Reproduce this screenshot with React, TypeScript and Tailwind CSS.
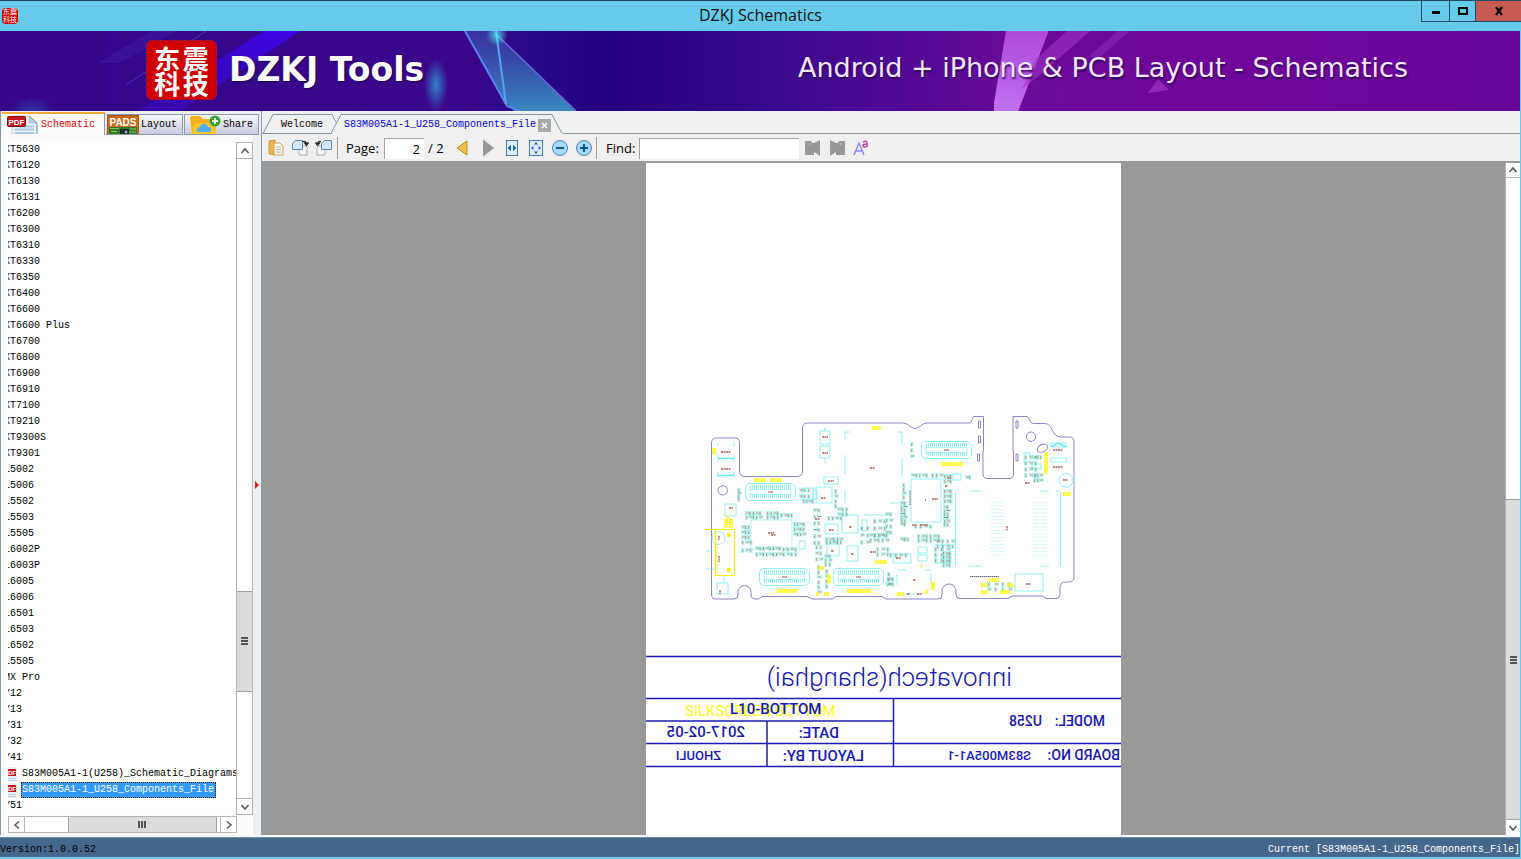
import React, { useState } from 'react';

const MODELS = [
  'XT5630', 'XT6120', 'XT6130', 'XT6131', 'XT6200', 'XT6300', 'XT6310', 'XT6330', 'XT6350', 'XT6400',
  'XT6600', 'XT6600 Plus', 'XT6700', 'XT6800', 'XT6900', 'XT6910', 'XT7100', 'XT9210', 'XT9300S', 'XT9301',
  'L5002', 'L5006', 'L5502', 'L5503', 'L5505', 'L6002P', 'L6003P', 'L6005', 'L6006', 'L6501', 'L6503',
  'L6502', 'L5505', 'MX Pro', 'Y12', 'Y13', 'Y31', 'Y32', 'Y41',
];
const FILES = ['S83M005A1-1(U258)_Schematic_Diagrams', 'S83M005A1-1_U258_Components_File'];

function Seal({ small = false }: { small?: boolean }) {
  return (
    <div
      className={
        small
          ? "grid h-4 w-4 shrink-0 grid-cols-2 place-items-center overflow-hidden rounded-sm bg-[#d00000] px-px font-['Noto_Sans_CJK_SC',sans-serif] text-[7px] leading-[7px] text-white"
          : "grid h-[60px] w-[71px] shrink-0 grid-cols-2 place-items-center rounded-md border border-[#a0103a] bg-[#d00000] px-1.5 py-1 font-['Noto_Sans_CJK_SC',sans-serif] text-[26px] leading-[25px] font-bold text-white"
      }
    >
      <span>东</span>
      <span>震</span>
      <span>科</span>
      <span>技</span>
    </div>
  );
}

function TitleBar() {
  return (
    <header className="flex h-[31px] shrink-0 items-start border-t border-[#1c4a66] bg-[#66cbea]">
      <div className="flex h-[29px] w-[100px] items-center pl-0.5">
        <Seal small />
      </div>
      <h1 className="flex-1 text-center font-['Open_Sans',sans-serif] text-[16px] leading-[29px] text-[#111]">DZKJ Schematics</h1>
      <div className="flex h-[21px] w-[100px] border-b border-l border-[#1c4a66]">
        <button aria-label="Minimize" className="flex w-7 items-center justify-center border-r border-[#1c4a66]">
          <svg width="10" height="10"><rect x="1" y="5" width="8" height="3" fill="#000" /></svg>
        </button>
        <button aria-label="Maximize" className="flex w-[26px] items-center justify-center border-r border-[#1c4a66]">
          <svg width="10" height="10"><rect x="1" y="2" width="8" height="6" fill="none" stroke="#000" strokeWidth="2" /></svg>
        </button>
        <button aria-label="Close" className="flex flex-1 items-center justify-center bg-[#c75a52]">
          <svg width="10" height="10"><path d="M2 1L8 9M8 1L2 9" stroke="#000" strokeWidth="2.2" /></svg>
        </button>
      </div>
    </header>
  );
}

function BannerArt() {
  return (
    <svg className="absolute inset-0 h-full w-full" viewBox="0 0 1520 80" preserveAspectRatio="xMidYMid slice" aria-hidden="true">
      <defs>
        <linearGradient id="base" x1="0" x2="1">
          <stop offset="0" stopColor="#33068a" />
          <stop offset="0.31" stopColor="#3b068c" />
          <stop offset="0.35" stopColor="#260a86" />
          <stop offset="0.4" stopColor="#230080" />
          <stop offset="0.5" stopColor="#37088c" />
          <stop offset="0.57" stopColor="#4a0a94" />
          <stop offset="0.67" stopColor="#6a0a98" />
          <stop offset="0.8" stopColor="#70069a" />
          <stop offset="1" stopColor="#68069a" />
        </linearGradient>
        <linearGradient id="beam" x1="0" y1="1" x2="1" y2="0">
          <stop offset="0" stopColor="#3a0abc" stopOpacity="0.6" />
          <stop offset="1" stopColor="#3e06e8" />
        </linearGradient>
        <linearGradient id="glass" x1="0" x2="0" y1="0" y2="1">
          <stop offset="0" stopColor="#3a55b0" stopOpacity="0.55" />
          <stop offset="1" stopColor="#3a88c0" />
        </linearGradient>
        <linearGradient id="pink" x1="0" x2="0" y1="0" y2="1">
          <stop offset="0" stopColor="#b04ad6" />
          <stop offset="0.5" stopColor="#b65ce6" />
          <stop offset="1" stopColor="#c070f2" />
        </linearGradient>
        <radialGradient id="glow">
          <stop offset="0" stopColor="#3080c8" />
          <stop offset="1" stopColor="#3080c8" stopOpacity="0" />
        </radialGradient>
        <radialGradient id="spark">
          <stop offset="0" stopColor="#50f0f0" />
          <stop offset="1" stopColor="#50f0f0" stopOpacity="0" />
        </radialGradient>
      </defs>
      <rect width="1520" height="80" fill="url(#base)" />
      <path d="M264 0H300L180 80H138Z" fill="url(#beam)" />
      <path d="M152 0H176L120 32H98Z" fill="#4a30b0" opacity="0.3" />
      <path d="M206 0L126 54" stroke="#7060e0" opacity="0.5" />
      <ellipse cx="436" cy="54" rx="12" ry="27" fill="url(#glow)" />
      <ellipse cx="32" cy="80" rx="22" ry="14" fill="url(#glow)" opacity="0.4" />
      <path d="M465 0H497L506 75Z" fill="url(#glass)" />
      <path d="M497 4L576 80H514L506 72Z" fill="url(#glass)" />
      <path d="M465 0L507 75L520 80" fill="none" stroke="#5a84ec" strokeWidth="2" />
      <path d="M496 0L506 73" stroke="#58a4ee" strokeWidth="2" />
      <path d="M497 4L576 80" stroke="#7068e0" strokeWidth="1.5" />
      <circle cx="497" cy="4" r="11" fill="url(#spark)" opacity="0.8" />
      <path d="M1006 0H1048L1018 80H994V72Z" fill="url(#pink)" />
      <path d="M1048 0L1018 80" stroke="#e060e8" opacity="0.7" />
      <path d="M1067 0H1090L1040 44L1022 58L1036 28Z" fill="#a034c4" opacity="0.6" />
      <path d="M1118 0H1130L1100 26H1088Z" fill="#9a34c0" opacity="0.4" />
      <path d="M1158 48L1169 59L1148 62Z" fill="#a034c4" opacity="0.7" />
    </svg>
  );
}

function Banner() {
  return (
    <div className="relative h-20 shrink-0 overflow-hidden bg-[#33068a]">
      <BannerArt />
      <div className="relative flex h-full items-center justify-between pr-28 pb-0.5 pl-[146px] font-['DejaVu_Sans',sans-serif] text-white">
        <div className="flex items-center gap-3">
          <Seal />
          <span className="text-[33px] leading-10 font-bold [text-shadow:1px_1px_2px_#1a0050]">DZKJ Tools</span>
        </div>
        <span className="pb-1 text-[27px] leading-9 text-[#f3e8fa] [text-shadow:1px_2px_2px_#30005a]">
          Android + iPhone &amp; PCB Layout - Schematics
        </span>
      </div>
    </div>
  );
}

function PdfIcon() {
  return (
    <svg width="32" height="19" viewBox="0 0 32 19" className="shrink-0" aria-hidden="true">
      <path d="M5 1H22L30 8V19H5Z" fill="#e8f2f8" stroke="#c3d8e4" />
      <path d="M22 1V8H30Z" fill="#b6d0e0" stroke="#90b0c4" strokeWidth="0.6" />
      <path d="M22 1L30 8V19" fill="none" stroke="#7d99ac" />
      <path d="M13 11.500H27M8 14.500H27M8 18H27" stroke="#a9cbe2" strokeWidth="2" />
      <rect x="0.500" y="1.500" width="18" height="10" rx="1" fill="#c4161c" stroke="#8c0b10" />
      <text x="9.500" y="9.500" textAnchor="middle" fontSize="8" fontWeight="700" fill="#fff" fontFamily="Liberation Sans, sans-serif">PDF</text>
    </svg>
  );
}

function PadsIcon() {
  return (
    <svg width="32" height="19" viewBox="0 0 32 19" className="shrink-0" aria-hidden="true">
      <rect x="0.500" y="0.500" width="31" height="20" fill="#c96a1c" stroke="#a8590f" />
      <rect x="2" y="12" width="28" height="7" fill="#2f7a2a" />
      <path d="M3 13.500H12M4 16.500H10M23 14H29M22 17H29" stroke="#7fc85a" />
      <rect x="13" y="14" width="9" height="5" fill="#1d2a22" />
      <circle cx="19" cy="17" r="1.500" fill="#9ab" />
      <text x="16" y="10.500" textAnchor="middle" fontSize="10" fontWeight="700" fill="#fff" fontFamily="Liberation Sans, sans-serif">PADS</text>
    </svg>
  );
}

function ShareIcon() {
  return (
    <svg width="32" height="19" viewBox="0 0 32 19" className="shrink-0" aria-hidden="true">
      <path d="M1 3Q1 1 3 1H11L14 4H26V19H3Z" fill="#f5b01a" />
      <path d="M6 8H27V19H2Z" fill="#fdc52c" />
      <path d="M10 17Q7 17 8 14Q9 12 11 12Q13 7 17 9Q19 10 19 12Q23 12 22 15Q22 17 19 17Z" fill="#55aef0" />
      <circle cx="26" cy="6" r="5.500" fill="#2fa53a" />
      <path d="M26 3V9M23 6H29" stroke="#fff" strokeWidth="2" />
    </svg>
  );
}

function SideTabs() {
  return (
    <div role="tablist" className="flex h-6 items-end gap-px pl-px text-[10px] leading-4">
      <button role="tab" aria-selected="true" className="flex h-[23px] w-[103px] items-center gap-0.5 overflow-hidden border-t-2 border-r border-t-[#f5a936] border-r-[#8a9aaa] bg-[#fcfcfd] pl-[5px] text-[#e00000]">
        <PdfIcon />
        Schematic
      </button>
      <button role="tab" aria-selected="false" className="flex h-[21px] w-[77px] items-center gap-0.5 overflow-hidden border border-l-0 border-[#8a9aaa] bg-linear-to-b from-[#f6f7fb] to-[#c9cbe0] pl-px">
        <PadsIcon />
        Layout
      </button>
      <button role="tab" aria-selected="false" className="flex h-[21px] w-[75px] items-center gap-0.5 overflow-hidden border border-[#8a9aaa] bg-linear-to-b from-[#f6f7fb] to-[#c9cbe0] pl-1">
        <ShareIcon />
        Share
      </button>
    </div>
  );
}

function Chevron({ d }: { d: string }) {
  return (
    <svg width="10" height="10" viewBox="0 0 10 10" aria-hidden="true">
      <path d={d} fill="none" stroke="#555" strokeWidth="1.500" />
    </svg>
  );
}
const UP = 'M1.500 7L5 3L8.500 7';
const DOWN = 'M1.500 3L5 7L8.500 3';
const LEFT = 'M7 1.500L3 5L7 8.500';
const RIGHT = 'M3 1.500L7 5L3 8.500';

function Tree() {
  const [selected, setSelected] = useState(FILES[1]);
  return (
    <ul className="min-h-0 flex-1 overflow-hidden bg-white text-[10px] leading-4 whitespace-pre text-black">
      {MODELS.map((m, i) => (
        <li key={i} className="-ml-1 h-4">{m}</li>
      ))}
      {FILES.map((f) => (
        <li key={f} className="flex h-4 items-center gap-[3px]">
          <svg width="10" height="15" viewBox="0 0 10 15" className="shrink-0" aria-hidden="true">
            <rect width="9" height="15" fill="#e6f0f7" />
            <path d="M0 11.500H8M0 13.500H8" stroke="#b5d0e2" />
            <rect y="2" width="8" height="7" fill="#c4161c" />
            <text x="0" y="8" fontSize="6" fontWeight="700" fill="#fff" fontFamily="Liberation Sans, sans-serif">DF</text>
          </svg>
          <button
            onClick={() => setSelected(f)}
            className={
              f === selected
                ? 'h-4 border border-dotted border-[#402000] bg-[#3399ff] pr-px leading-[14px] text-white'
                : 'h-4 border border-transparent leading-[14px]'
            }
          >
            {f}
          </button>
        </li>
      ))}
      <li className="-ml-1 h-4">Y51</li>
    </ul>
  );
}

function Sidebar() {
  return (
    <aside className="flex w-[261px] shrink-0 flex-col border-l border-[#8a9aaa] bg-[#efefef]">
      <SideTabs />
      <div className="flex min-h-0 flex-1">
        <div className="flex min-w-0 flex-1 flex-col bg-[#fcfcfd] pt-[7px] pb-[2px] pl-[7px]">
          <div className="flex min-h-0 flex-1">
            <div className="flex min-w-0 flex-1 flex-col">
              <Tree />
            </div>
            <div className="flex w-[17px] flex-col border border-[#b4b4b4] bg-white">
              <button aria-label="Scroll list up" className="flex h-4 items-center justify-center border-b border-[#b4b4b4]"><Chevron d={UP} /></button>
              <div className="flex-[434_1_0%]" />
              <div className="flex flex-[99_1_0%] flex-col items-center justify-center gap-px border-y border-[#a0a0a0] bg-[#dcdcdc]">
                <i className="h-0.5 w-[7px] bg-[#555]" />
                <i className="h-0.5 w-[7px] bg-[#555]" />
                <i className="h-0.5 w-[7px] bg-[#555]" />
              </div>
              <div className="flex-[107_1_0%]" />
              <button aria-label="Scroll list down" className="flex h-4 items-center justify-center border-t border-[#b4b4b4]"><Chevron d={DOWN} /></button>
            </div>
          </div>
          <div className="mt-px mr-4 flex h-[17px] border border-[#b4b4b4] bg-white">
            <button aria-label="Scroll list left" className="flex w-4 items-center justify-center border-r border-[#b4b4b4]"><Chevron d={LEFT} /></button>
            <div className="flex-[43_1_0%]" />
            <div className="flex flex-[148_1_0%] items-center justify-center gap-px border-x border-[#a0a0a0] bg-[#dcdcdc]">
              <i className="h-[7px] w-0.5 bg-[#555]" />
              <i className="h-[7px] w-0.5 bg-[#555]" />
              <i className="h-[7px] w-0.5 bg-[#555]" />
            </div>
            <div className="w-[3px]" />
            <button aria-label="Scroll list right" className="flex w-4 items-center justify-center border-l border-[#b4b4b4]"><Chevron d={RIGHT} /></button>
          </div>
        </div>
        <button aria-label="Collapse panel" className="flex w-2 items-center justify-center bg-[#efefef]">
          <svg width="6" height="8" aria-hidden="true"><path d="M1 0L5 4L1 8Z" fill="#d81e1e" /></svg>
        </button>
      </div>
    </aside>
  );
}

function DocTabs() {
  return (
    <div role="tablist" className="flex h-6 text-[10px] leading-4">
      <div className="relative flex h-6 w-[75px] items-center">
        <svg className="absolute top-0 left-0" width="80" height="24" aria-hidden="true">
          <path d="M0 22.500H1L11 3.500H70L75 13" fill="none" stroke="#8496a6" />
          <path d="M1 22.500H71" stroke="#8496a6" />
        </svg>
        <button role="tab" aria-selected="false" className="relative mt-1 ml-[19px]">Welcome</button>
      </div>
      <div className="relative flex h-6 w-[226px] items-center">
        <svg className="absolute top-0 right-0" width="232" height="24" aria-hidden="true">
          <path d="M0 22.500L10 3.500H221L231 22.500" fill="#f0f0f0" stroke="#8496a6" />
        </svg>
        <button role="tab" aria-selected="true" className="relative mt-1 ml-[7px] text-[#0000e0]">S83M005A1-1_U258_Components_File</button>
        <button aria-label="Close tab" className="relative mt-1 ml-0.5 flex h-[13px] w-[13px] items-center justify-center bg-[#a8a8a8]">
          <svg width="7" height="7" aria-hidden="true"><path d="M1 1L6 6M6 1L1 6" stroke="#fff" strokeWidth="1.600" /></svg>
        </button>
      </div>
      <div className="h-[23px] flex-1 border-b border-[#8e9aa4]" />
    </div>
  );
}

function ToolButton({ label, children }: { label: string; children: React.ReactNode }) {
  return (
    <button aria-label={label} className="flex h-6 w-6 shrink-0 items-center justify-center">
      <svg width="18" height="18" viewBox="0 0 18 18" aria-hidden="true">{children}</svg>
    </button>
  );
}

const pageSheet = (x: number, y: number) => (
  <path d={`M${x} ${y}h6v9h-8v-7z`} fill="#f6f6f6" stroke="#a9b2bc" />
);

function Toolbar() {
  return (
    <div className="flex h-[28px] items-center border-b-2 border-[#999] bg-[#f0f0f0] pl-0.5 font-['Open_Sans',sans-serif] text-[13px] leading-5 text-black">
      <ToolButton label="Copy">
        <path d="M2 2L8 1V16L2 15Z" fill="#e8b850" stroke="#c99a3c" />
        <path d="M8 4H13L16 7V16H7V4Z" fill="#fdf6e2" stroke="#c8a860" />
        <path d="M9 8H14M9 10.500H14M9 13H14" stroke="#a8b8c8" />
      </ToolButton>
      <ToolButton label="Rotate right">
        {pageSheet(10, 7)}
        <path d="M4.500 1.500H11.500V10.500H1.500V4.500Z" fill="#d5e7fa" stroke="#5c86b4" />
        <path d="M12 2.500Q15.500 2 15.500 5M13.500 4L15.500 6.500L17.500 4Z" fill="none" stroke="#222" strokeWidth="1.200" />
      </ToolButton>
      <ToolButton label="Rotate left">
        {pageSheet(4, 7)}
        <path d="M9.500 1.500H16.500V10.500H6.500V4.500Z" fill="#d5e7fa" stroke="#5c86b4" />
        <path d="M6 2.500Q2.500 2 2.500 5M0.500 4L2.500 6.500L4.500 4Z" fill="none" stroke="#222" strokeWidth="1.200" />
      </ToolButton>
      <i className="mr-2 ml-px h-[22px] w-px bg-[#a0a0a0]" />
      <label htmlFor="page" className="w-[38px]">Page:</label>
      <input id="page" defaultValue="2" className="h-[21px] w-10 border-t border-l border-[#a0a0a0] bg-white pr-1 text-right outline-none" />
      <span className="ml-1 w-[22px] whitespace-nowrap">/ 2</span>
      <ToolButton label="Previous page">
        <path d="M14 2V16L4 9Z" fill="#eec04c" stroke="#b98a1e" />
      </ToolButton>
      <i className="w-[2px]" />
      <ToolButton label="Next page">
        <path d="M4 1H5L15 9L5 17H4Z" fill="#989898" />
      </ToolButton>
      <ToolButton label="Fit width">
        <rect x="3.500" y="1.500" width="11" height="15" fill="#dcecfc" stroke="#4a80b8" />
        <path d="M8 6V12L4.500 9ZM10 6V12L13.500 9Z" fill="#1f5c9c" />
      </ToolButton>
      <ToolButton label="Fit page">
        <rect x="2.500" y="1.500" width="13" height="15" fill="#dcecfc" stroke="#4a80b8" />
        <path d="M9 3L11 5.500H7ZM9 15L11 12.500H7ZM4 9L6.500 7V11ZM14 9L11.500 7V11Z" fill="#1f5c9c" />
      </ToolButton>
      <ToolButton label="Zoom out">
        <circle cx="9" cy="9" r="7.500" fill="#a8d8f8" stroke="#4a80b8" />
        <path d="M5 9H13" stroke="#14528c" strokeWidth="2" />
      </ToolButton>
      <ToolButton label="Zoom in">
        <circle cx="9" cy="9" r="7.500" fill="#a8d8f8" stroke="#4a80b8" />
        <path d="M5 9H13M9 5V13" stroke="#14528c" strokeWidth="2" />
      </ToolButton>
      <i className="mr-[9px] h-[22px] w-px bg-[#a0a0a0]" />
      <label htmlFor="find" className="w-[33px]">Find:</label>
      <input id="find" className="mr-0.5 h-[21px] w-[160px] border-t border-l border-[#a0a0a0] bg-white px-1 outline-none" />
      <ToolButton label="Find previous">
        <path d="M1 2H7L8 4H10L16 1V17L10 13V16H1Z" fill="#989898" />
        <path d="M5 5H6" stroke="#f0f0f0" />
      </ToolButton>
      <ToolButton label="Find next">
        <path d="M17 2H11L10 4H8L2 1V17L8 13V16H17Z" fill="#989898" />
        <path d="M12 5H13" stroke="#f0f0f0" />
      </ToolButton>
      <ToolButton label="Match case">
        <path d="M2 16L7 4L12 16M4 12H10" fill="none" stroke="#8e84f0" strokeWidth="1.400" />
        <path d="M11 3Q14.500 1 15 4V8M14.500 5Q10.500 5 11 7Q12.500 9 15 7" fill="none" stroke="#c040a0" strokeWidth="1.500" />
      </ToolButton>
    </div>
  );
}

const BOARD =
  'M711.500 443q0-5 5-5H735q4.500 0 4.500 5V471q0 5.500 5.500 5.500H797q5.500 0 5.500-5.500V428q0-5 5-5H904c4 0 6 5.500 11 5.500s7-5.500 11-5.500H969c4 0 2-6.500 6-6.500H983.500V450L983 452V474q0 4.500 5 4.500H1009q4.500 0 4.500-4.500V452L1013 450V416.500H1026c4 0 3 7 8 7H1045c8 0 6 13.500 16 13.500H1069q5 0 5 5V577q0 5-5 5h-3q-6 0-6 6v5q0 5.500-4 5.500H1046l-3-2.500H1012l-4 2.500H960q-4 0-4-4V591a7 7 0 0 0-14 0V595q0 4-4 4H886l-4-2.500H836l-3.500 2.500H812l-5-2.500H762l-3.500 2.500H756q-5 0-5-4V592a6.500 6.500 0 0 0-13 0V595q0 4-4 4H716q-4.500 0-4.500-5Z';

function Connector({ x, y }: { x: number; y: number }) {
  return (
    <g transform={`translate(${x} ${y})`} fill="none" stroke="#5ff0f4">
      <path d="M3 0.500H47L50.500 4V14L47 17.500H3L0.500 14V4Z" strokeWidth="0.700" />
      <path d="M5 4H46M5 13H46" strokeWidth="3.500" strokeDasharray="0.700 1.300" />
      <path d="M5 6.500H46V11.500H5Z" strokeWidth="0.500" />
      <path d="M23 9H28" stroke="#b05040" />
    </g>
  );
}

/* Banks of small passives: x, y, columns, rows, column pitch, row pitch */
const BANKS: [number, number, number, number, number, number][] = [
  [746, 512, 5, 2, 3.3, 4], [767, 512, 4, 2, 3.3, 4], [781, 514, 4, 1, 3.3, 4],
  [742, 526, 3, 3, 3, 5], [794, 523, 4, 3, 3, 5], [742, 541, 3, 2, 4, 8],
  [756, 547, 8, 2, 3.3, 6], [783, 548, 4, 2, 4, 5], [738, 489, 1, 4, 3, 3],
  [800, 489, 3, 2, 4, 6], [803, 500, 4, 1, 3, 4], [835, 490, 1, 4, 3, 5],
  [814, 509, 2, 6, 4, 6.500], [828, 517, 4, 1, 4, 5], [826, 538, 5, 2, 3.5, 3],
  [838, 508, 3, 2, 4, 5], [861, 527, 2, 3, 6, 7], [874, 520, 3, 3, 5, 7],
  [870, 534, 5, 2, 4, 5], [816, 546, 2, 3, 4, 6], [877, 548, 3, 2, 5, 5],
  [825, 555, 2, 3, 4, 4], [818, 566, 1, 6, 4, 5], [826, 570, 1, 4, 4, 5],
  [912, 474, 5, 1, 3.5, 4], [932, 474, 3, 1, 4, 4], [944, 475, 3, 2, 3, 5],
  [901, 502, 2, 7, 3, 3.500], [903, 484, 1, 4, 3, 4], [944, 490, 3, 3, 3, 5],
  [944, 506, 2, 6, 3, 3.500], [915, 525, 4, 1, 5, 4], [918, 535, 6, 2, 4, 4],
  [937, 540, 4, 2, 5, 5], [935, 548, 3, 3, 6, 5.500], [943, 552, 3, 4, 3, 4],
  [886, 513, 2, 4, 4, 6], [890, 554, 4, 1, 5, 4], [887, 578, 3, 2, 2.500, 5],
  [901, 538, 3, 1, 3, 4], [911, 443, 1, 3, 3, 6], [1025, 456, 3, 4, 5, 6],
  [1034, 456, 3, 1, 3, 5], [1034, 474, 3, 2, 3, 5], [988, 583, 4, 2, 7, 5],
  [966, 476, 2, 1, 3, 4], [888, 573, 1, 3, 4, 5],
];

const BOXES: [number, number, number, number][] = [
  [820, 431, 10, 13], [820, 446, 10, 12],
  [725, 504, 11, 12], [717, 583, 11, 11], [816, 487, 16, 16], [824, 477, 14, 7],
  [825, 524, 13, 10], [842, 515, 16, 18], [827, 544, 12, 12], [847, 546, 11, 15],
  [862, 520, 5, 11], [802, 488, 11, 12], [813, 490, 4, 9], [799, 541, 6, 8],
  [911, 479, 30, 43], [953, 474, 8, 6], [918, 547, 9, 6], [918, 555, 9, 6],
  [893, 554, 18, 9], [1015, 574, 28, 17], [1024, 453, 6, 9], [1032, 464, 9, 5],
  [935, 545, 8, 18], [943, 545, 7, 18], [1051, 443, 15, 4], [1051, 458, 15, 4],
];

const RED_MARKS =
  'M721 452H731M721 469H731M822 437H828M822 453H828M870 468H875M768 533H774M771 535H776M729 508H733M821 498H826M828 481H834M849 527H852M829 530H834M831 551H834M851 554H854M925 500H926M932 499H938M945 486H948M912 525H917M920 525H928M1053 450H1063M1053 467H1063M1063 480H1068M1026 584H1031M913 580H916M947 478H951M896 558H901M870 552H876M815 519H820M1025 483H1030M917 594H922M907 594H910M720 590V594M719 536V540M719 556V562M1007 526V531';

const YELLOW_LABELS = 'M754 480H766M770 480H782M777 591H797M847 591H871M872 428H881M941 464H963M1063 494H1071M897 594H904M875 562H887M816 594H819M824 594H829M981 585H987M989 580H999M1007 585H1013M981 592H988M1000 592H1010M921 566H922M931 585H934M925 592H928M1046 452V474M714 448V454M829 575V583M821 567V569M726 519V528M731 519V528M933 582V590';

function BoardDrawing() {
  return (
    <g fill="none">
      <path d={BOARD} stroke="#8c84c8" strokeWidth="1" />
      <g stroke="#8c84c8" strokeWidth="1">
        <circle cx="722.700" cy="490.300" r="4.700" />
        <circle cx="1031" cy="436.700" r="4.700" />
        <ellipse cx="1042.500" cy="448.200" rx="5.500" ry="3.600" transform="rotate(-28 1042.500 448.200)" />
        <path d="M978.500 421h2v7h-2zM978.500 436h2v7h-2zM977.500 454h2v7h-2zM1016 421h2v7h-2zM1016 454h2v7h-2z" />
      </g>
      <g stroke="#66eef2" strokeWidth="0.700">
        {BOXES.map(([x, y, w, h], i) => (
          <rect key={i} x={x} y={y} width={w} height={h} />
        ))}
        <path d="M718 443V447M734 443V447M718 455V462M734 455V462M718 472V477M734 472V477" />
        <path d="M845 440V432H850M845 455V474M845 490V503M897 432H902V445M902 458V477M864 515H887M890 503H902V500" />
        <path d="M751 520H792V549H751Z" strokeDasharray="2 1" />
        <path d="M955.500 492V566M1060.500 492V566M970 491H981M1040 491H1049M968 566H982M1040 566H1049M1056 491H1060" />
        <path d="M994 502V556M1001 502V556M1036 502V556M1044 502V556" strokeWidth="7" strokeDasharray="0.700 2.800" opacity="0.350" />
        <path d="M898 570H906M925 570H931M897 574V585M931 574V584M903 594H914" />
        <circle cx="1066" cy="480.500" r="7" />
        <circle cx="718.500" cy="538" r="6.500" />
        <path d="M706 551H712M706 569H714M825 427V431M825 458V463M724 575V583" />
        <path d="M718 458.500H734M718 475.500H734M1051 447L1058 443L1066 447" strokeWidth="1.500" />
      </g>
      <Connector x={745} y={483} />
      <Connector x={759} y={568} />
      <Connector x={833} y={568} />
      <Connector x={921} y={441} />
      {BANKS.map(([x, y, cols, rows, px, py], i) =>
        Array.from({ length: cols * rows }, (_, n) => {
          const cx = x + (n % cols) * px;
          const cy = y + Math.floor(n / cols) * py;
          const tall = (i + n) % 3 !== 0;
          return (
            <g key={`${i}-${n}`}>
              <rect x={cx - 0.4} y={cy - 0.5} width={tall ? 2.4 : 3.6} height={tall ? 4 : 2.8} stroke="#8af0e8" strokeWidth="0.500" />
              <path d={tall ? `M${cx + 0.8} ${cy}v3` : `M${cx} ${cy + 1}h3`} stroke={(i + n) % 2 ? '#a8705c' : '#5c9478'} strokeWidth="0.900" />
            </g>
          );
        }),
      )}
      <path d={RED_MARKS} stroke="#b06050" strokeWidth="1.300" strokeDasharray="2 0.500" />
      <path d="M970 576.500H999M910 490V505" stroke="#666" strokeWidth="1" strokeDasharray="1.500 0.500" />
      <path d={YELLOW_LABELS} stroke="#ffff20" strokeWidth="4" strokeDasharray="1.800 0.500" />
      <path d="M705 529.500H735M715.500 529.500V575.500H734.500V529.500M819 567H823V569H819Z" stroke="#fff000" strokeWidth="1.200" />
      <path d="M717 545V573" stroke="#f5e800" strokeDasharray="1 1.500" />
      <circle cx="729" cy="535" r="2" fill="#fff000" />
      <circle cx="729" cy="570" r="2.200" fill="#fff000" />
      <path d="M727 516L731 520L727 524Z" stroke="#fff000" />
    </g>
  );
}

function Mirrored({ x, y, size = 15, children }: { x: number; y: number; size?: number; children: string }) {
  return (
    <text transform={`translate(${x} ${y}) scale(-1 1)`} fontSize={size} xmlSpace="preserve">{children}</text>
  );
}

function Sheet() {
  return (
    <svg width="475" height="672" viewBox="646 163 475 672" className="shrink-0 bg-white" role="img" aria-label="Component placement, bottom side">
      <BoardDrawing />
      <path d="M646 656.500H1121M646 698.500H1121M646 721H893.500M646 743.500H1121M646 766.500H1121M893.500 698.500V766.500M767 721V766.500" fill="none" stroke="#1c1cb4" strokeWidth="1.500" />
      <g fill="#1818b4" fontFamily="Roboto, sans-serif">
        <g fontWeight="300">
          <Mirrored x={1012} y={686} size={26}>innovatech(shanghai)</Mirrored>
        </g>
        <text x="685" y="716" fontSize="15" fill="#ffff20">SILKSCREEN BOTTOM</text>
        <g fontWeight="500">
          <text x="730" y="714" fontSize="15">L10-BOTTOM</text>
          <Mirrored x={1105} y={726} size={14}>MODEL:</Mirrored>
          <Mirrored x={1042} y={726} size={14}>U258</Mirrored>
          <Mirrored x={745} y={737}>2017-02-05</Mirrored>
          <Mirrored x={839} y={738}>DATE:</Mirrored>
          <Mirrored x={721} y={760} size={13}>ZHOULI</Mirrored>
          <Mirrored x={864} y={761}>LAYOUT BY:</Mirrored>
          <Mirrored x={1120} y={760} size={14}>BOARD NO:</Mirrored>
          <Mirrored x={1031} y={760} size={13}>S83M005A1-1</Mirrored>
        </g>
      </g>
    </svg>
  );
}

function Viewer() {
  return (
    <div className="flex min-h-0 flex-1 bg-[#999]">
      <div className="flex min-w-0 flex-1 items-start justify-center overflow-hidden">
        <Sheet />
      </div>
      <div className="flex w-[15px] flex-col border-l border-[#b4b4b4] bg-white">
        <button aria-label="Scroll page up" className="flex h-[15px] items-center justify-center border-b border-[#b4b4b4]"><Chevron d={UP} /></button>
        <div className="flex-[322_1_0%]" />
        <div className="flex flex-[320_1_0%] flex-col items-center justify-center gap-px border-y border-[#a0a0a0] bg-[#dcdcdc]">
          <i className="h-0.5 w-[7px] bg-[#555]" />
          <i className="h-0.5 w-[7px] bg-[#555]" />
          <i className="h-0.5 w-[7px] bg-[#555]" />
        </div>
        <button aria-label="Scroll page down" className="flex h-[15px] items-center justify-center"><Chevron d={DOWN} /></button>
      </div>
    </div>
  );
}

export default function App() {
  return (
    <div className="flex h-screen flex-col overflow-hidden border-b-2 border-[#66cbea] bg-[#f0f0f0] font-['Liberation_Mono','Noto_Sans_CJK_SC',monospace] text-black">
      <TitleBar />
      <div className="flex min-h-0 flex-1 flex-col border-r border-[#66cbea]">
        <Banner />
        <main className="flex min-h-0 flex-1 border-b-2 border-[#f8f8f8]">
          <Sidebar />
          <section className="flex min-w-0 flex-1 flex-col border-l border-[#8a9aaa]">
            <DocTabs />
            <Toolbar />
            <Viewer />
          </section>
        </main>
        <footer className="flex h-5 shrink-0 items-center justify-between border-t border-[#6f8cab] bg-[#44678b] pt-1 text-[10px] leading-4">
          <span className="text-black">Version:1.0.0.52</span>
          <span className="text-white">Current [S83M005A1-1_U258_Components_File]</span>
        </footer>
      </div>
    </div>
  );
}
